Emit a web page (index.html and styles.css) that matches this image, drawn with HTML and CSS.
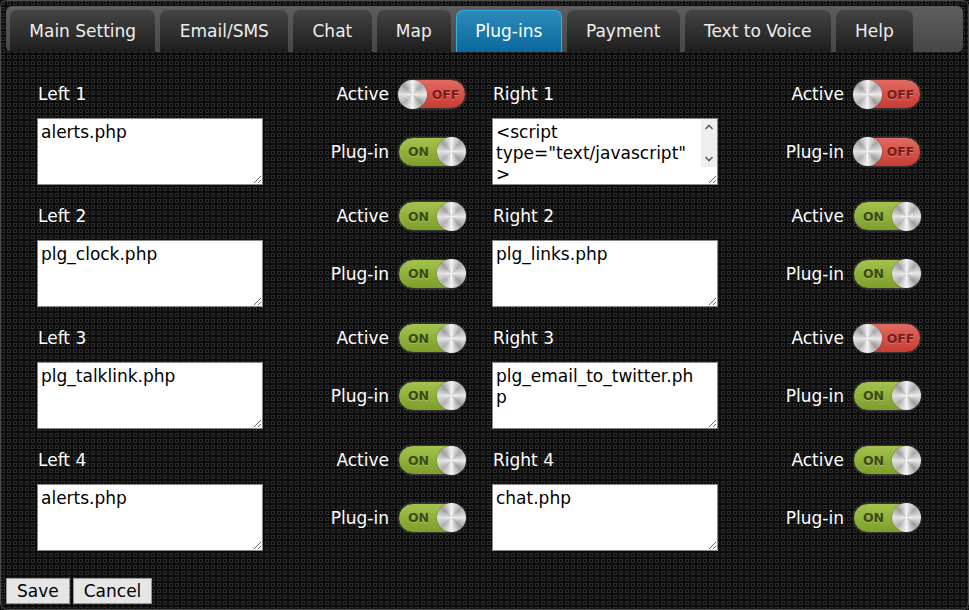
FILE: index.html
```html
<!DOCTYPE html>
<html lang="en">
<head>
  <meta charset="UTF-8" />
  <meta name="viewport" content="width=device-width, initial-scale=1.0"/>
  <title>Plug-ins</title>
  <link rel="stylesheet" href="styles.css">
</head>
<body>
  <div class="window">
    <div class="tabbar">
      <a class="tab">Main Setting</a>
      <a class="tab">Email/SMS</a>
      <a class="tab">Chat</a>
      <a class="tab">Map</a>
      <a class="tab active">Plug-ins</a>
      <a class="tab">Payment</a>
      <a class="tab">Text to Voice</a>
      <a class="tab">Help</a>
    </div>

    <div class="grid">
      <div class="field">
        <div class="name">Left 1</div>
        <div class="opt">Active <span class="toggle off"><span class="knob"></span><span class="state">OFF</span></span></div>
        <textarea>alerts.php</textarea>
        <div class="opt">Plug-in <span class="toggle on"><span class="knob"></span><span class="state">ON</span></span></div>
      </div>
      <div class="field">
        <div class="name">Right 1</div>
        <div class="opt">Active <span class="toggle off"><span class="knob"></span><span class="state">OFF</span></span></div>
        <div class="ta-wrap">
          <textarea class="scroll"><script
type="text/javascript"
>
</script></textarea>
          <div class="sbar">
            <svg width="16" height="17" viewBox="0 0 16 17"><path d="M4.5 10 L8 6.5 L11.5 10" fill="none" stroke="#606060" stroke-width="1.6"/></svg>
            <svg width="16" height="17" viewBox="0 0 16 17"><path d="M4.5 7 L8 10.5 L11.5 7" fill="none" stroke="#606060" stroke-width="1.6"/></svg>
          </div>
        </div>
        <div class="opt">Plug-in <span class="toggle off"><span class="knob"></span><span class="state">OFF</span></span></div>
      </div>

      <div class="field">
        <div class="name">Left 2</div>
        <div class="opt">Active <span class="toggle on"><span class="knob"></span><span class="state">ON</span></span></div>
        <textarea>plg_clock.php</textarea>
        <div class="opt">Plug-in <span class="toggle on"><span class="knob"></span><span class="state">ON</span></span></div>
      </div>
      <div class="field">
        <div class="name">Right 2</div>
        <div class="opt">Active <span class="toggle on"><span class="knob"></span><span class="state">ON</span></span></div>
        <textarea>plg_links.php</textarea>
        <div class="opt">Plug-in <span class="toggle on"><span class="knob"></span><span class="state">ON</span></span></div>
      </div>

      <div class="field">
        <div class="name">Left 3</div>
        <div class="opt">Active <span class="toggle on"><span class="knob"></span><span class="state">ON</span></span></div>
        <textarea>plg_talklink.php</textarea>
        <div class="opt">Plug-in <span class="toggle on"><span class="knob"></span><span class="state">ON</span></span></div>
      </div>
      <div class="field">
        <div class="name">Right 3</div>
        <div class="opt">Active <span class="toggle off"><span class="knob"></span><span class="state">OFF</span></span></div>
        <textarea class="brk">plg_email_to_twitter.php</textarea>
        <div class="opt">Plug-in <span class="toggle on"><span class="knob"></span><span class="state">ON</span></span></div>
      </div>

      <div class="field">
        <div class="name">Left 4</div>
        <div class="opt">Active <span class="toggle on"><span class="knob"></span><span class="state">ON</span></span></div>
        <textarea>alerts.php</textarea>
        <div class="opt">Plug-in <span class="toggle on"><span class="knob"></span><span class="state">ON</span></span></div>
      </div>
      <div class="field">
        <div class="name">Right 4</div>
        <div class="opt">Active <span class="toggle on"><span class="knob"></span><span class="state">ON</span></span></div>
        <textarea>chat.php</textarea>
        <div class="opt">Plug-in <span class="toggle on"><span class="knob"></span><span class="state">ON</span></span></div>
      </div>
    </div>

    <div class="actions">
      <button class="btn">Save</button>
      <button class="btn">Cancel</button>
    </div>
  </div>
</body>
</html>
```

FILE: styles.css
```css
html, body {
  margin: 0;
  height: 100%;
}
body {
  background-color: #0b0b0b;
  background-image: radial-gradient(circle, transparent 1.1px, #2c2c2c 1.5px, #2c2c2c 2.1px, transparent 2.5px);
  background-size: 6px 6px;
  color: #fff;
  font-family: 'DejaVu Sans', Verdana, sans-serif;
  font-size: 17px;
}
.window {
  width: 969px;
  height: 610px;
  box-sizing: border-box;
  border: 1px solid #4c4c4c;
  border-radius: 7px;
  padding: 5px 5px 0;
  position: relative;
}
.tabbar {
  display: flex;
  gap: 5px;
  align-items: flex-end;
  height: 46px;
  box-sizing: border-box;
  padding: 4px 4px 0;
  background: linear-gradient(#5e5e5e, #474747);
  border-radius: 6px;
}
.tab {
  height: 42px;
  line-height: 42px;
  padding: 0 19.3px;
  box-sizing: border-box;
  border-radius: 7px 7px 0 0;
  background: linear-gradient(#444, #1d1d1d);
  color: #eee;
  cursor: pointer;
}
.tab.active {
  background: linear-gradient(#2c8abb, #0a689c);
  border: 1px solid #3aaee4;
  border-bottom: none;
  line-height: 40px;
  padding: 0 18.3px;
  color: #fff;
}
.grid {
  display: grid;
  grid-template-columns: 429px 429px;
  column-gap: 26px;
  row-gap: 16px;
  padding: 27px 0 0 31px;
}
.field {
  display: grid;
  grid-template-columns: 226px 1fr;
  grid-template-rows: 30px 67px;
  row-gap: 9px;
  align-items: center;
}
.name {
  padding-left: 1px;
}
.opt {
  display: flex;
  justify-content: flex-end;
  align-items: center;
  gap: 9px;
}
textarea {
  display: block;
  width: 226px;
  height: 67px;
  box-sizing: border-box;
  margin: 0;
  padding: 3px 3px 1px;
  border: 1px solid #8a8a8a;
  font-family: 'DejaVu Sans', Verdana, sans-serif;
  font-size: 17px;
  line-height: 21px;
  color: #000;
  background: #fff;
  resize: vertical;
  overflow: hidden;
}
.ta-wrap {
  position: relative;
  width: 226px;
  height: 67px;
}
textarea.scroll {
  padding-right: 18px;
}
.sbar {
  position: absolute;
  top: 1px;
  right: 1px;
  width: 16px;
  height: 48px;
  background: #efefef;
  display: flex;
  flex-direction: column;
  justify-content: space-between;
}
.sbar svg {
  display: block;
}
textarea.brk {
  word-break: break-all;
  padding-right: 14px;
}
.toggle {
  display: flex;
  align-items: center;
  width: 68px;
  height: 30px;
  box-sizing: border-box;
  border-radius: 15px;
  padding: 0;
  border: 1px solid #333;
  box-shadow: 0 0 2px #555;
}
.toggle.off {
  background: linear-gradient(#e26a62, #c73c34);
}
.toggle.on {
  flex-direction: row-reverse;
  background: linear-gradient(#a4c24e, #7d9e2a);
}
.knob {
  width: 29px;
  height: 29px;
  margin: -1px;
  border-radius: 50%;
  flex: none;
  background:
    radial-gradient(circle, rgba(255,255,255,0.6) 0, rgba(255,255,255,0) 40%),
    conic-gradient(#f2f2f2, #a9a9a9, #e8e8e8, #9c9c9c, #f4f4f4, #b0b0b0, #e2e2e2, #a0a0a0, #f2f2f2);
  box-shadow: 0 0 1px #222;
}
.state {
  flex: 1;
  text-align: center;
  font-size: 12.5px;
  font-weight: bold;
  text-shadow: 0 1px 0 rgba(255,255,255,0.25);
}
.off .state {
  color: #7a1c18;
}
.on .state {
  color: #3a4a12;
}
.actions {
  position: absolute;
  left: 5px;
  bottom: 5px;
  display: flex;
  gap: 3px;
}
.btn {
  height: 26px;
  padding: 0 10px;
  margin: 0;
  background: #e6e6e6;
  border: 1px solid #9a9a9a;
  border-radius: 0;
  font-family: 'DejaVu Sans', Verdana, sans-serif;
  font-size: 17px;
  color: #000;
}
```
